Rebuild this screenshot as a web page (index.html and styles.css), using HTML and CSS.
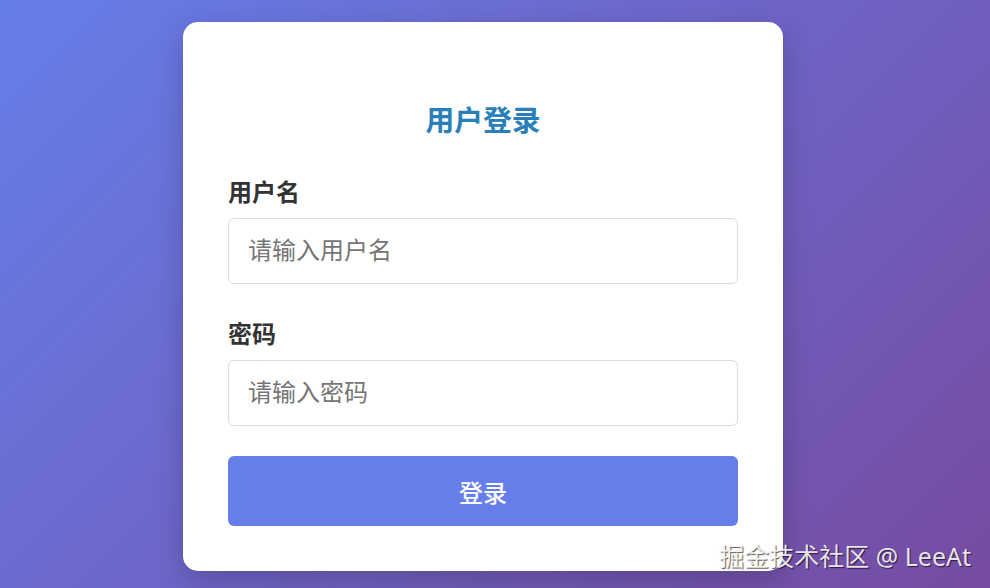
FILE: index.html
```html
<!DOCTYPE html>
<html lang="zh-CN">
<head>
<meta charset="utf-8">
<title>用户登录</title>
<link rel="stylesheet" href="styles.css">
</head>
<body>
<div class="card">
  <h2 class="title">用户登录</h2>
  <form class="form">
    <div class="group">
      <label class="label" for="u">用户名</label>
      <input class="input" id="u" type="text" placeholder="请输入用户名">
    </div>
    <div class="group">
      <label class="label" for="p">密码</label>
      <input class="input" id="p" type="password" placeholder="请输入密码">
    </div>
    <button class="btn" type="button">登录</button>
  </form>
</div>
<div class="watermark">掘金技术社区 @ LeeAt</div>
</body>
</html>
```
FILE: styles.css
```css
* { box-sizing: border-box; }
html, body { margin: 0; padding: 0; }
body {
  width: 990px;
  height: 588px;
  overflow: hidden;
  position: relative;
  background: linear-gradient(135deg, #667eea 0%, #764ba2 100%);
  font-family: "Noto Sans", "Noto Sans CJK SC", sans-serif;
  padding: 22px 0 0 183px;
}
.card {
  width: 600px;
  background: #fff;
  border-radius: 15px;
  padding: 45px 45px 45px;
  box-shadow: 0 10px 30px rgba(0, 0, 0, 0.2);
}
.title {
  margin: 31px 0 33px;
  text-align: center;
  font-size: 28.8px;
  line-height: 43px;
  font-weight: 700;
  color: #2980b9;
}
.form { display: flex; flex-direction: column; }
.group { display: flex; flex-direction: column; margin-bottom: 32px; }
.group + .group { margin-bottom: 30px; }
.label {
  font-size: 24px;
  line-height: 36px;
  font-weight: 700;
  color: #333;
  margin-bottom: 8px;
}
.input {
  height: 66px;
  width: 100%;
  border: 1px solid #ddd;
  border-radius: 6px;
  padding: 0 19px 4px;
  font-family: inherit;
  font-size: 24px;
  color: #333;
  outline: none;
}
.input::placeholder { color: #757575; }
.btn {
  height: 70px;
  width: 100%;
  border: none;
  border-radius: 6px;
  background: #667eea;
  color: #fff;
  font-family: inherit;
  font-size: 24px;
  font-weight: 500;
}
.watermark {
  position: absolute;
  right: 19px;
  bottom: 16px;
  font-size: 25px;
  line-height: 32px;
  color: rgba(255, 255, 255, 0.88);
  text-shadow: 1px 1px 1px rgba(0, 0, 0, 0.65);
}
```
